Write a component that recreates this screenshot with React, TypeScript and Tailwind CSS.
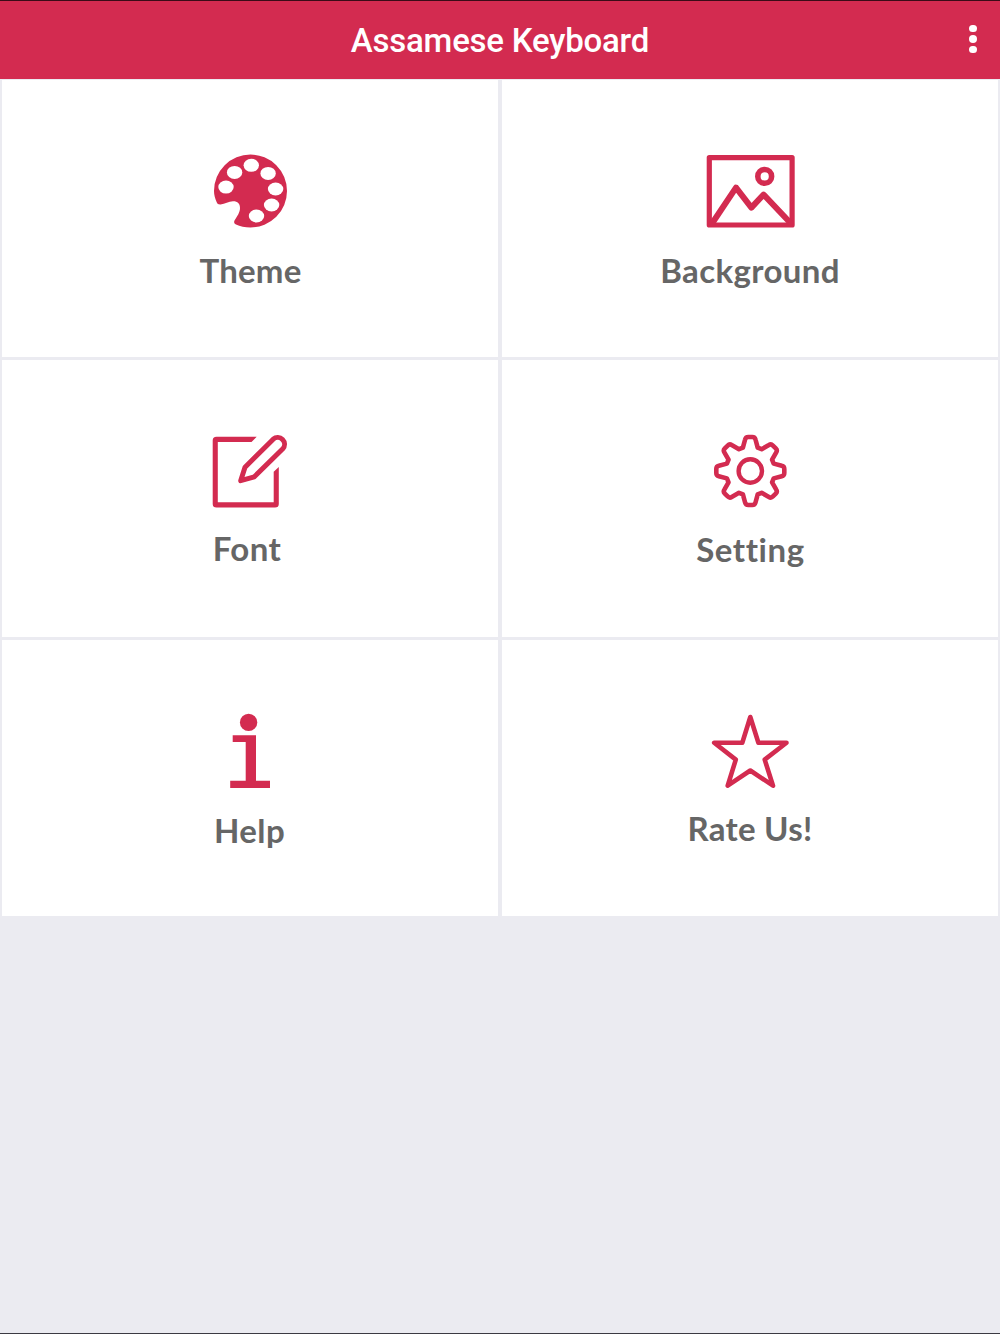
import React from 'react';

const GEAR_CENTER = { x: 50.3, y: 41 };

// one tooth pointing up, repeated around the center
const gearPath = () => {
  const parts: string[] = [];
  for (let i = 0; i < 8; i++) {
    const a = (i * Math.PI) / 4;
    const p = (x: number, y: number) =>
      `${(GEAR_CENTER.x + x * Math.cos(a) - y * Math.sin(a)).toFixed(2)} ${(GEAR_CENTER.y + x * Math.sin(a) + y * Math.cos(a)).toFixed(2)}`;
    parts.push(
      `${i === 0 ? 'M' : 'L'}${p(-7.4, -23.4)}L${p(-5.2, -31.5)}Q${p(-4.6, -34)} ${p(-2, -34)}L${p(2, -34)}Q${p(4.6, -34)} ${p(5.2, -31.5)}L${p(7.4, -23.4)}`
    );
  }
  return parts.join('') + 'Z';
};

const ThemeIcon = () => (
  <>
    <path
      fill="currentColor"
      d="M16.6 52C15 48.5 14 44.5 14 41A36.5 36.5 0 1 1 50.5 77.5C45 77.5 40 76.5 36 74.5C34 73.5 33.6 71.8 34.8 70C37 66.5 40 62.5 40 58C40 53.5 37.5 51.2 33 51.3C28.5 51.5 25 54.2 20.5 54.5C18.3 54.6 17.2 53.8 16.6 52Z"
    />
    <g fill="white">
      <ellipse cx="51.3" cy="15.3" rx="7.7" ry="6.5" />
      <ellipse cx="34.6" cy="22.4" rx="7.7" ry="6.5" />
      <ellipse cx="68.1" cy="23.4" rx="7.7" ry="6.5" />
      <ellipse cx="26" cy="37.1" rx="7.7" ry="6.5" />
      <ellipse cx="75.6" cy="39" rx="7.7" ry="6.5" />
      <ellipse cx="71.6" cy="55" rx="7.7" ry="6.5" />
      <ellipse cx="56.5" cy="66" rx="7.7" ry="6.5" />
    </g>
  </>
);

const BackgroundIcon = () => (
  <g fill="none" stroke="currentColor" strokeWidth="5.2" strokeLinejoin="round" strokeLinecap="round">
    <rect x="9.3" y="7.6" width="82.8" height="67.4" />
    <path d="M12 73.5L36 37.6L51.4 57.6L63.6 44.6L90.5 73" strokeWidth="6" />
    <circle cx="64.7" cy="26.4" r="6.9" strokeWidth="5.6" />
  </g>
);

const FontIcon = () => (
  <>
    <path
      fill="currentColor"
      d="M56.7 6.8H16.5Q12.7 6.8 12.7 10.5V74Q12.7 77.6 16.5 77.6H75Q78.8 77.6 78.8 74V37L73.7 41.8V72.3H17.8V12.1H51.5Z"
    />
    <path
      fill="none"
      stroke="currentColor"
      strokeWidth="5"
      strokeLinejoin="round"
      d="M45 37.2L73.2 9.2A6.8 6.8 0 0 1 82.8 18.8L54.3 46.8L40.7 50.7Z"
    />
  </>
);

const SettingIcon = () => (
  <g fill="none" stroke="currentColor" strokeWidth="4.6" strokeLinejoin="round">
    <path d={gearPath()} />
    <circle cx={GEAR_CENTER.x} cy={GEAR_CENTER.y} r="11.7" strokeWidth="4.4" />
  </g>
);

const HelpIcon = () => (
  <g fill="currentColor">
    <circle cx="48.6" cy="12.4" r="8.7" />
    <path d="M32.7 25.3H56V70.7H70V78H30.2V70.7H45.7V32H32.7Z" />
  </g>
);

const RateIcon = () => (
  <path
    fill="none"
    stroke="currentColor"
    strokeWidth="4.6"
    strokeLinejoin="round"
    d="M50.3 7L58.4 32.7H86.5L64.7 49.6L73 75.7L50.3 60.5L27.7 75.7L35.8 49.6L14.2 32.7H42.3Z"
  />
);

interface MenuItem {
  label: string;
  Icon: () => React.JSX.Element;
  labelClass: string;
}

const items: MenuItem[] = [
  { label: 'Theme', Icon: ThemeIcon, labelClass: 'mt-[20px] pl-px tracking-[0.2px]' },
  { label: 'Background', Icon: BackgroundIcon, labelClass: 'mt-[20px] tracking-[0.35px]' },
  { label: 'Font', Icon: FontIcon, labelClass: 'mt-[18px] pr-[6px] tracking-[0.4px]' },
  { label: 'Setting', Icon: SettingIcon, labelClass: 'mt-[19px] pl-px tracking-[0.6px]' },
  { label: 'Help', Icon: HelpIcon, labelClass: 'mt-[20px] pr-px tracking-[0.4px]' },
  { label: 'Rate Us!', Icon: RateIcon, labelClass: 'mt-[18px] tracking-[0.25px]' },
];

const Header = () => (
  <header className="grid h-[79px] grid-cols-[1fr_auto_1fr] items-center border-t border-[#3a0b17] bg-[#d32b50] text-white">
    <h1 className="col-start-2 pt-[2px] font-['Roboto',sans-serif] text-[33px] leading-10 font-medium tracking-[-0.22px]">
      Assamese Keyboard
    </h1>
    <button aria-label="More options" className="mr-[23.5px] mb-[2px] flex flex-col gap-[3.2px] justify-self-end">
      <span className="size-[7.2px] rounded-full bg-white" />
      <span className="size-[7.2px] rounded-full bg-white" />
      <span className="size-[7.2px] rounded-full bg-white" />
    </button>
  </header>
);

export default function App() {
  return (
    <div className="flex h-[1334px] w-[1000px] flex-col border-b border-[#3b3a42] bg-[#ebebf1]">
      <Header />
      <main className="grid grid-cols-2 grid-rows-[277px_277px_276px] gap-x-[4px] gap-y-[3px] px-[2px] pt-px">
        {items.map(({ label, Icon, labelClass }) => (
          <button key={label} className="flex flex-col items-center justify-start bg-white pt-[70px]">
            <svg viewBox="0 0 100 80" className="h-[80px] w-[100px] shrink-0 text-[#d32b50]">
              <Icon />
            </svg>
            <span className={`font-['Lato',sans-serif] text-[33px] leading-10 font-bold text-[#666666] ${labelClass}`}>{label}</span>
          </button>
        ))}
      </main>
    </div>
  );
}
